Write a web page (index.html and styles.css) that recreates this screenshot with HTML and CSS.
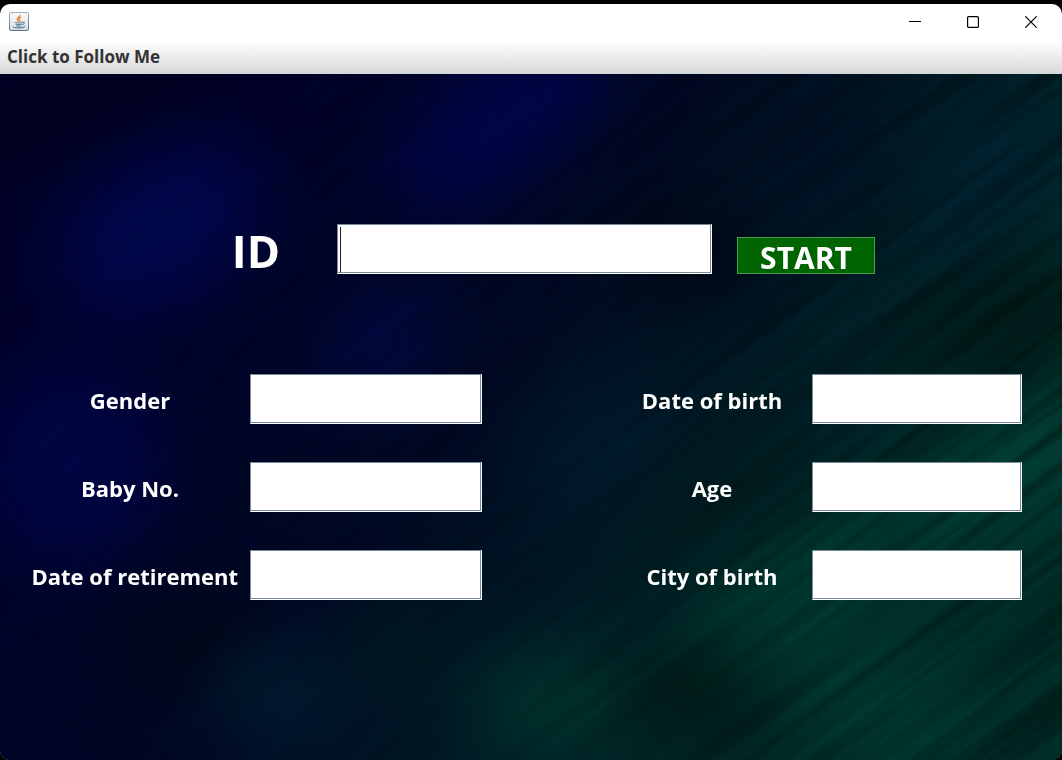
FILE: index.html
```html
<!DOCTYPE html>
<html lang="en">
<head>
<meta charset="utf-8">
<meta name="viewport" content="width=device-width, initial-scale=1">
<title>ID</title>
<link rel="stylesheet" href="styles.css">
</head>
<body>
<div class="window">
  <header class="titlebar">
    <svg class="app-icon" viewBox="0 0 20 20" aria-hidden="true">
      <defs>
        <linearGradient id="tile" x1="0" y1="0" x2="0" y2="1"><stop offset="0" stop-color="#fbfbfb"/><stop offset="1" stop-color="#d8dde2"/></linearGradient>
        <linearGradient id="rim" x1="0" y1="0" x2="0" y2="1"><stop offset="0" stop-color="#9caebd"/><stop offset="1" stop-color="#54758f"/></linearGradient>
      </defs>
      <rect x=".5" y=".5" width="19" height="18" rx="1.5" fill="url(#tile)" stroke="url(#rim)"/>
      <path d="M10.8 3c.8 2-3.4 2.900-2.400 5 .3.700 1 1.100 1.200 1.600M12 5.400c-2 1-2.500 1.800-1.400 2.900.5.500.2 1-.3 1.400" fill="none" stroke="#ed8a38" stroke-width="1.500"/>
      <path d="M6 10.300c2 .8 5 .8 7.600 0M6.500 12c2 .7 4.300.7 6.300 0M7.200 13.700c1.500.5 3.500.5 5 0M13.600 10.200c2.300-.7 2.500 1.600-.4 2.500M4.500 14.500c-1.500 1.500 8.500 2 11.500.2" fill="none" stroke="#5c84a3" stroke-width="1.100"/>
    </svg>
    <div class="window-buttons">
      <button class="window-button" type="button" aria-label="Minimize"><svg viewBox="0 0 12 12"><path d="M0 5.500h12"/></svg></button>
      <button class="window-button" type="button" aria-label="Maximize"><svg viewBox="0 0 12 12"><rect x=".6" y=".6" width="10.800" height="10.800" rx="1"/></svg></button>
      <button class="window-button" type="button" aria-label="Close"><svg viewBox="0 0 12 12"><path d="M.3.3l11.400 11.400M11.700.3L.3 11.700"/></svg></button>
    </div>
  </header>
  <nav class="menubar"><button class="menu" type="button">Click to Follow Me</button></nav>
  <main class="content">
    <svg class="backdrop" viewBox="0 0 1062 686" preserveAspectRatio="none" aria-hidden="true">
      <defs>
        <filter id="soft" x="-20%" y="-20%" width="140%" height="140%" color-interpolation-filters="sRGB"><feGaussianBlur stdDeviation="34"/></filter>
        <filter id="grain" x="0" y="0" width="100%" height="100%" color-interpolation-filters="sRGB">
          <feTurbulence type="fractalNoise" baseFrequency="0.003 0.07" numOctaves="3" seed="8"/>
          <feColorMatrix values="0 0 0 0 0  0 0 0 0 0  0 0 0 0 0  2 0 0 0 -.7"/>
        </filter>
        <linearGradient id="base" gradientUnits="userSpaceOnUse" x1="200" y1="130" x2="850" y2="600">
          <stop offset="0" stop-color="#00022a"/><stop offset=".42" stop-color="#000a24"/><stop offset=".68" stop-color="#001c26"/><stop offset="1" stop-color="#002e29"/>
        </linearGradient>
        <linearGradient id="fade"><stop offset="0" stop-color="#222"/><stop offset=".5" stop-color="#555"/><stop offset="1" stop-color="#fff"/></linearGradient>
        <mask id="ramp"><rect width="1062" height="686" fill="url(#fade)"/></mask>
      </defs>
      <rect width="1062" height="686" fill="url(#base)"/>
      <g filter="url(#soft)">
        <ellipse cx="160" cy="155" rx="110" ry="70" fill="#00084e" transform="rotate(-35 160 155)"/>
        <ellipse cx="500" cy="45" rx="130" ry="60" fill="#00064a" transform="rotate(-40 500 45)"/>
        <ellipse cx="380" cy="270" rx="70" ry="40" fill="#000a46" transform="rotate(-50 380 270)"/>
        <ellipse cx="70" cy="390" rx="90" ry="100" fill="#000644"/>
        <ellipse cx="60" cy="30" rx="170" ry="40" fill="#00031c" transform="rotate(-20 60 30)"/>
        <ellipse cx="190" cy="570" rx="80" ry="50" fill="#000618"/>
        <ellipse cx="690" cy="180" rx="80" ry="50" fill="#000818"/>
        <ellipse cx="600" cy="370" rx="80" ry="50" fill="#001c2e" transform="rotate(-40 600 370)"/>
        <ellipse cx="280" cy="620" rx="70" ry="50" fill="#001c30"/>
        <ellipse cx="800" cy="70" rx="70" ry="60" fill="#001024"/>
        <ellipse cx="980" cy="110" rx="90" ry="60" fill="#002230" transform="rotate(-50 980 110)"/>
        <ellipse cx="1010" cy="250" rx="100" ry="50" fill="#001c1a" transform="rotate(-35 1010 250)"/>
        <ellipse cx="720" cy="420" rx="100" ry="40" fill="#001c1e" transform="rotate(-35 720 420)"/>
        <ellipse cx="990" cy="410" rx="140" ry="45" fill="#004238" transform="rotate(-35 990 410)"/>
        <ellipse cx="800" cy="530" rx="180" ry="60" fill="#003a31" transform="rotate(-35 800 530)"/>
        <ellipse cx="560" cy="630" rx="90" ry="50" fill="#00332d"/>
        <ellipse cx="400" cy="570" rx="50" ry="40" fill="#001c20"/>
        <ellipse cx="700" cy="625" rx="80" ry="45" fill="#001a18"/>
        <ellipse cx="890" cy="640" rx="90" ry="50" fill="#003b32"/>
      </g>
      <g mask="url(#ramp)"><rect x="-300" y="-450" width="1700" height="1600" transform="rotate(-36 531 343)" filter="url(#grain)" opacity=".4"/></g>
    </svg>
    <form class="form">
      <div class="search">
        <label class="search-label" for="id">ID</label>
        <input class="field field-active" id="id" type="text">
        <button class="start" type="button">START</button>
      </div>
      <div class="details">
        <label class="label" for="gender">Gender</label><input class="field" id="gender" type="text">
        <label class="label label-right" for="birth">Date of birth</label><input class="field" id="birth" type="text">
        <label class="label" for="baby">Baby No.</label><input class="field" id="baby" type="text">
        <label class="label label-right" for="age">Age</label><input class="field" id="age" type="text">
        <label class="label label-long" for="retirement">Date of retirement</label><input class="field" id="retirement" type="text">
        <label class="label label-right" for="city">City of birth</label><input class="field" id="city" type="text">
      </div>
    </form>
  </main>
</div>
</body>
</html>
```

FILE: styles.css
```css
* { box-sizing: border-box; }
body {
  margin: 0;
  background: #000;
  font-family: "Open Sans", "Noto Sans", sans-serif;
  font-weight: 700;
}
.window {
  display: flex;
  flex-direction: column;
  min-height: calc(100vh - 4px);
  margin-top: 4px;
  overflow: hidden;
  border-radius: 10px;
  background: #fff;
}
.titlebar {
  display: flex;
  justify-content: space-between;
  align-items: center;
  height: 36px;
  padding: 0 2px 0 9px;
}
.app-icon { width: 20px; height: 20px; }
.window-buttons { display: flex; }
.window-button {
  display: grid;
  place-items: center;
  width: 58px;
  height: 36px;
  padding: 0;
  border: 0;
  background: transparent;
}
.window-button svg {
  width: 12px;
  height: 12px;
  fill: none;
  stroke: #000;
  stroke-width: 1.2;
}
.menubar {
  display: flex;
  height: 34px;
  border-bottom: 2px solid #d6d9d9;
  background: linear-gradient(#fff, #dadada);
}
.menu {
  padding: 2px 7px 0;
  border: 0;
  background: transparent;
  color: #333;
  font: inherit;
  font-size: 17px;
  line-height: 30px;
}
.content {
  position: relative;
  flex: 1;
  background: #000a22;
}
.backdrop {
  position: absolute;
  inset: 0;
  width: 100%;
  height: 100%;
}
.form {
  position: relative;
  padding: 150px 0 80px;
  color: #fff;
}
.search {
  display: grid;
  grid-template-columns: 312fr 375fr 138fr 162fr;
  column-gap: 25px;
  align-items: end;
}
.search-label {
  padding: 4px 32px 0 0;
  font-size: 45px;
  line-height: 46px;
  text-align: right;
}
.field {
  width: 100%;
  min-width: 0;
  height: 50px;
  padding: 0 6px;
  border: 1px solid;
  border-color: #7a8a99 #fff #fff #7a8a99;
  border-radius: 0;
  background: #fff;
  box-shadow: inset -1px -1px #7a8a99;
  color: #333;
  font: inherit;
  font-size: 22px;
}
.field-active {
  background: linear-gradient(#222, #222) 2px 2px / 1px 45px no-repeat #fff;
}
.start {
  height: 37px;
  padding: 4px 0 0;
  border: 1px solid #4d9a4d;
  background: #006400;
  color: #fff;
  font: inherit;
  font-size: 30px;
  line-height: 31px;
}
.details {
  display: grid;
  grid-template-columns: 250fr 232fr 330fr 210fr;
  row-gap: 38px;
  margin-top: 100px;
  padding-right: 40px;
}
.label {
  padding: 2px 0 0 10px;
  font-size: 22px;
  line-height: 48px;
  text-align: center;
  white-space: nowrap;
}
.label-right { padding-left: 130px; }
.label-long { padding-right: 12px; text-align: right; }
```
